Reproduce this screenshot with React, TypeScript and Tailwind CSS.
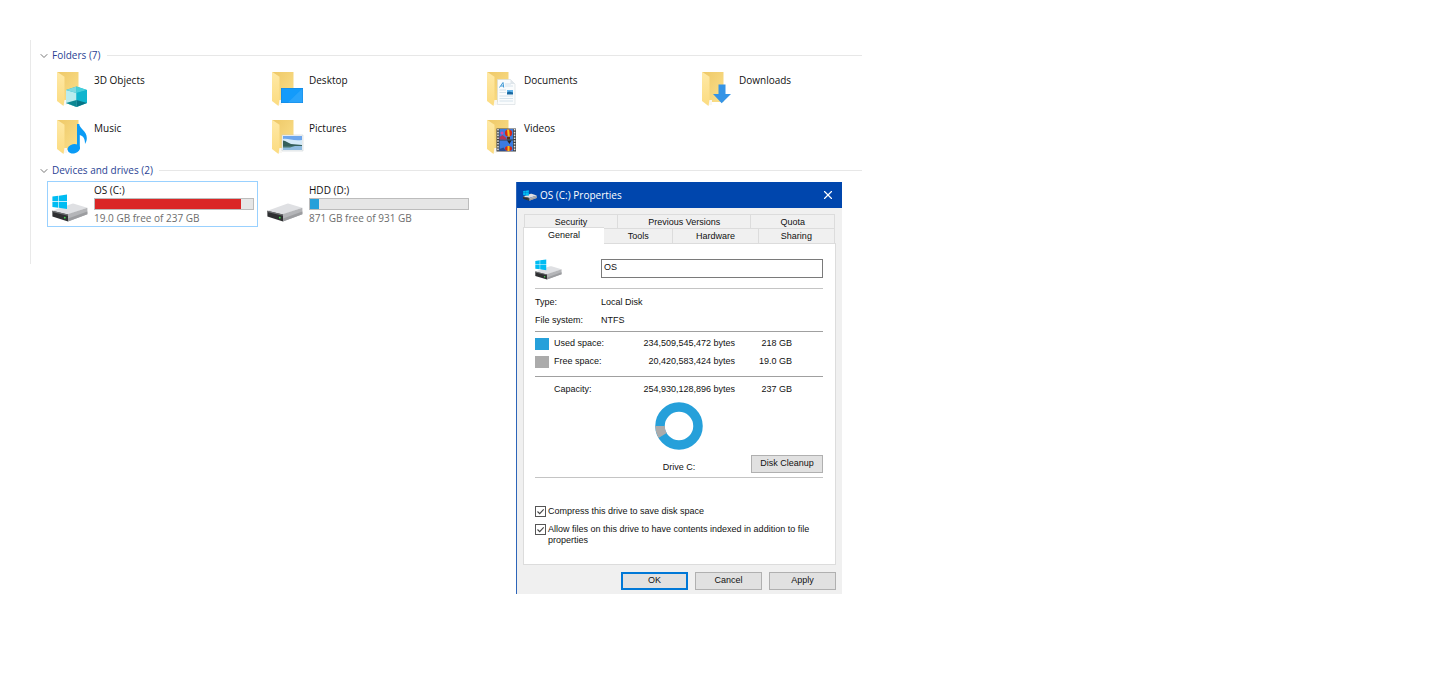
import React from 'react';
import { ChevronDown, X } from 'lucide-react';

const folders = [
  { name: '3D Objects', kind: 'objects' },
  { name: 'Desktop', kind: 'desktop' },
  { name: 'Documents', kind: 'documents' },
  { name: 'Downloads', kind: 'downloads' },
  { name: 'Music', kind: 'music' },
  { name: 'Pictures', kind: 'pictures' },
  { name: 'Videos', kind: 'videos' },
];

const drives = [
  { name: 'OS (C:)', info: '19.0 GB free of 237 GB', used: 92.5, color: 'bg-[#da2626]', system: true },
  { name: 'HDD (D:)', info: '871 GB free of 931 GB', used: 6, color: 'bg-[#26a0da]', system: false },
];

const backTabs = [
  { name: 'Security', width: 'w-[30%]' },
  { name: 'Previous Versions', width: 'w-[43%]' },
  { name: 'Quota', width: 'w-[27%]' },
];

const frontTabs = [
  { name: 'Tools', width: 'w-[30%]' },
  { name: 'Hardware', width: 'w-[37%]' },
  { name: 'Sharing', width: 'w-[33%]' },
];

function FolderBadge({ kind }: { kind: string }) {
  switch (kind) {
    case 'objects':
      return (
        <g>
          <path d="M20.500 15.500 31 19v13l-10.500 4L10 32V19z" fill="#18b7cb" />
          <path d="M10 19l10.500 3V36L10 32z" fill="#b9ecee" />
          <path d="M10 19l10.500-3.500V22z" fill="#7fd9e0" />
          <path d="M20.500 15.500 31 19l-10.500 3z" fill="#45cfdc" />
          <path d="M10 32l10.500-3v7z" fill="#0c8793" />
          <path d="M20.500 22 31 19v13l-10.500-3z" fill="#0fb5cf" />
          <path d="M20.500 29 31 32l-10.500 4z" fill="#067486" />
        </g>
      );
    case 'desktop':
      return (
        <g>
          <path d="M10 17h22v15H10z" fill="#1583dc" />
          <path d="M10.500 17.500h21v14h-21z" fill="#139bfb" />
          <path d="M31.500 17.500v14H17z" fill="#3fadfc" opacity="0.5" />
        </g>
      );
    case 'documents':
      return (
        <g>
          <path d="M11.500 8.500h13l4.500 4.500v20.500H11.500z" fill="#fafcfd" stroke="#d3dade" strokeWidth="0.6" />
          <path d="M24.500 8.500V13H29z" fill="#dfe6eb" />
          <path d="M13.500 16.500l3.500-5 .7 5M15 15h2.500" stroke="#2d8ed0" strokeWidth="0.9" fill="none" />
          <path d="M19 13h6M19 15h8M13.500 19h6.500M13.500 21.500h6.500M13.500 25h13.500M13.500 27.500h13.500M13.500 30h13.500" stroke="#ccdce6" strokeWidth="0.8" />
          <path d="M21 19h6v4h-6z" fill="#62b5ec" />
          <path d="M21 21.500l2-1 4 1v2h-6z" fill="#17679f" />
        </g>
      );
    case 'downloads':
      return <path d="M17.500 13.500h7V23H30l-9.300 9.300L12 23h5.500z" fill="#3594e6" />;
    case 'music':
      return (
        <g fill="#0a9bf5">
          <path d="M21 5h2.200c.6 5 7.600 7 7.600 14 0 2.500-.6 4-1.800 6 .2-5.500-2-8-5.200-9v14H21z" />
          <ellipse cx="17.800" cy="29.700" rx="6.300" ry="4.700" transform="rotate(-14 17.800 29.700)" />
        </g>
      );
    case 'pictures':
      return (
        <g>
          <path d="M11 16h21v16H11z" fill="#f4f6f8" stroke="#c2c8cc" strokeWidth="0.5" />
          <path d="M12 17h19v14H12z" fill="#6ea6ec" />
          <path d="M12 20c5-1 9 2 19 1v6H12z" fill="#d5eaf8" />
          <path d="M12 21.500c3 0 5 2.500 8 3.500l11 1V27H12z" fill="#35605b" />
          <path d="M12 27h19v4H12z" fill="#8fbbdf" />
          <path d="M12 27h12l-5 1.500h-7z" fill="#46746b" />
        </g>
      );
    case 'videos':
      return (
        <g>
          <path d="M10.500 9.500H30v23H10.500z" fill="#3c3f42" />
          <path d="M13.500 10h13.500v10.500H13.500zM13.500 21.500h13.500V32H13.500z" fill="#3b7be0" />
          <path d="M12 10v22M28.600 10v22" stroke="#e5e5e5" strokeWidth="1.600" strokeDasharray="1.600 1.200" />
          <ellipse cx="22.500" cy="14" rx="3.600" ry="3.600" fill="#d42718" />
          <path d="M21 10.500h2.200l.6 7h-2z" fill="#f2c31b" />
          <path d="M21 18h3v2.500h-3z" fill="#57361a" />
          <circle cx="16" cy="14" r="1.500" fill="#e0479d" />
          <path d="M13.500 18l3-2 4 3v1.500h-7z" fill="#b43456" />
          <path d="M21 21.500h4.500L23.500 25z" fill="#2b251d" />
          <ellipse cx="22.500" cy="29.500" rx="3.600" ry="2.500" fill="#d42718" />
          <path d="M21.500 27h2v5h-2z" fill="#f2c31b" />
          <path d="M13.500 30l4-1.500 2.500 3.500h-6.500z" fill="#2a4c93" />
        </g>
      );
    default:
      return null;
  }
}

function FolderIcon({ kind }: { kind: string }) {
  return (
    <svg viewBox="0 0 36 36" className="h-9 w-9 shrink-0" aria-hidden="true">
      <defs>
        <linearGradient id={`back-${kind}`} x1="0" y1="0" x2="1" y2="1">
          <stop offset="0" stopColor="#eec867" />
          <stop offset="1" stopColor="#fbe08c" />
        </linearGradient>
        <linearGradient id={`flap-${kind}`} x1="0" y1="0" x2="0" y2="1">
          <stop offset="0" stopColor="#ffe9a6" />
          <stop offset="1" stopColor="#fbdb80" />
        </linearGradient>
      </defs>
      <path d="M1 1h21.500v30H8z" fill={`url(#back-${kind})`} />
      <path d="M7 29h4v5H7z" fill="#f8f7f4" />
      <path d="M1 .7l7.500 5v23L7.500 35 1 30z" fill={`url(#flap-${kind})`} />
      <FolderBadge kind={kind} />
    </svg>
  );
}

function DriveIcon({ system, className }: { system: boolean; className: string }) {
  return (
    <svg viewBox="0 0 36 28" className={className} aria-hidden="true">
      <path d="M.4 16.700 20 9.700q1-.3 2 0l13.300 4L16 20.500z" fill="#dfe0e3" />
      <path d="M15.500 20.300 35.400 13.700v6.600L16 27.400z" fill="#b4b5b8" />
      <path d="M16 24.500 35.400 17.500v2.800L16 27.400z" fill="#9c9da0" />
      <path d="M.4 16.700 16 20.500v6.900L.4 22.500z" fill="#2e2f31" />
      <path d="M.4 16.700 16 20.500v1.300L.4 17.900z" fill="#6d6f72" />
      <circle cx="12.800" cy="23.700" r="0.900" fill="#3fe04a" />
      {system && (
        <path
          d="M.4 2.600 6.300 1.800v5.300H.4zM6.900 1.700 15 .6v6.500H6.900zM.4 7.700h5.900v6L.4 12.900zM6.900 7.700H15v7.200l-8.100-1.100z"
          fill="#00bcf2"
        />
      )}
    </svg>
  );
}

function SectionHeader({ title }: { title: string }) {
  return (
    <div className="flex h-[19px] items-center pl-[7px]">
      <ChevronDown className="h-3 w-3 text-[#777777]" strokeWidth={2} />
      <h2 className="ml-0.5 pb-0.5 text-[10px] leading-4 text-[#2a3f94]">{title}</h2>
      <div className="ml-1.5 h-px flex-1 bg-[#e7e7e7]" />
    </div>
  );
}

function Drive({ drive, selected }: { drive: (typeof drives)[number]; selected: boolean }) {
  return (
    <li
      className={`flex h-[46px] gap-1.5 border pt-px pr-[3px] pl-1 ${
        selected ? 'border-[#99d1ff]' : 'border-transparent'
      }`}
    >
      <DriveIcon system={drive.system} className="mt-[11px] h-7 w-9 shrink-0" />
      <div className="flex-1 text-[10px] leading-[14px]">
        <p className="text-[#111111]">{drive.name}</p>
        <div className="mt-px h-3 border border-[#bcbcbc] bg-[#e6e6e6]">
          <div className={`h-full ${drive.color}`} style={{ width: `${drive.used}%` }} />
        </div>
        <p className="pt-px text-[#6d6d6d]">{drive.info}</p>
      </div>
    </li>
  );
}

function Tab({ name, width }: { name: string; width: string }) {
  return (
    <button
      type="button"
      role="tab"
      aria-selected={false}
      className={`h-full border-t border-r border-[#dcdcdc] pt-px ${width}`}
    >
      {name}
    </button>
  );
}

function CheckRow({ id, label }: { id: string; label: string }) {
  return (
    <div className="flex items-start gap-0.5">
      <div className="grid shrink-0">
        <input
          id={id}
          type="checkbox"
          defaultChecked
          className="peer col-start-1 row-start-1 h-[11px] w-[11px] appearance-none border border-[#555555] bg-white"
        />
        <svg
          viewBox="0 0 11 11"
          className="pointer-events-none invisible col-start-1 row-start-1 h-[11px] w-[11px] peer-checked:visible"
        >
          <path d="M2.500 5.500l2.200 2.200L8.700 3.300" fill="none" stroke="#444444" strokeWidth="1.100" />
        </svg>
      </div>
      <label htmlFor={id} className="leading-[11px]">
        {label}
      </label>
    </div>
  );
}

function PropertiesDialog() {
  return (
    <div
      role="dialog"
      aria-label="OS (C:) Properties"
      className="absolute top-[142px] left-[486px] w-[326px] border-l border-[#2d65b9] bg-[#f0f0f0] font-['Liberation_Sans',sans-serif] text-[9px] text-[#111111]"
    >
      {/* Title bar */}
      <div className="flex h-[26px] items-center bg-[#0046ad] pr-[7px] pl-1.5 text-white">
        <DriveIcon system className="h-[11px] w-[14px]" />
        <h1 className="ml-[3px] flex-1 font-['Open_Sans','Noto_Sans',sans-serif] text-[10px]">OS (C:) Properties</h1>
        <button type="button" aria-label="Close">
          <X className="h-[14px] w-[14px]" strokeWidth={2} />
        </button>
      </div>

      <div className="px-1.5 pt-1.5 pb-1">
        {/* Tabs */}
        <div role="tablist">
          <div className="mx-px flex h-[14px] border-l border-[#dcdcdc]">
            {backTabs.map((tab) => (
              <Tab key={tab.name} name={tab.name} width={tab.width} />
            ))}
          </div>
          <div className="flex h-[15px] pr-px">
            <button
              type="button"
              role="tab"
              aria-selected
              className="-mt-px -mb-px h-[17px] w-[81px] border-t border-l border-[#dcdcdc] bg-white"
            >
              General
            </button>
            <div className="flex flex-1">
              {frontTabs.map((tab) => (
                <Tab key={tab.name} name={tab.name} width={tab.width} />
              ))}
            </div>
          </div>
        </div>

        {/* General page */}
        <div className="border border-[#dcdcdc] bg-white pt-[15px] pr-3 pb-[18px] pl-[11px]">
          <div className="flex items-start">
            <DriveIcon system className="h-[21px] w-[27px]" />
            <input
              type="text"
              defaultValue="OS"
              aria-label="Drive label"
              className="ml-[39px] h-[19px] min-w-0 flex-1 border border-[#7a7a7a] bg-white px-0.5 pb-1"
            />
          </div>

          <dl className="mt-2 grid grid-cols-[66px_1fr] border-t border-b border-t-[#c4c4c4] border-b-[#a0a0a0] pt-1 pb-0.5 leading-[18px]">
            <dt>Type:</dt>
            <dd>Local Disk</dd>
            <dt>File system:</dt>
            <dd>NTFS</dd>
          </dl>

          <table className="w-full border-collapse">
            <tbody>
              <tr className="h-[21px]">
                <td className="w-[19px] pt-[3px]">
                  <div className="h-3 w-[14px] bg-[#26a0da]" />
                </td>
                <th scope="row" className="w-[72px] pt-[3px] text-left font-normal">Used space:</th>
                <td className="pt-[3px] text-right">234,509,545,472 bytes</td>
                <td className="w-[57px] pt-[3px] text-right">218 GB</td>
                <td className="w-[31px]" />
              </tr>
              <tr className="h-[23px]">
                <td className="pb-[5px]">
                  <div className="h-3 w-[14px] bg-[#ababab]" />
                </td>
                <th scope="row" className="pb-[5px] text-left font-normal">Free space:</th>
                <td className="pb-[5px] text-right">20,420,583,424 bytes</td>
                <td className="pb-[5px] text-right">19.0 GB</td>
                <td />
              </tr>
              <tr className="h-[26px] border-t border-[#a0a0a0]">
                <td />
                <th scope="row" className="text-left font-normal">Capacity:</th>
                <td className="text-right">254,930,128,896 bytes</td>
                <td className="text-right">237 GB</td>
                <td />
              </tr>
            </tbody>
          </table>

          <div className="grid grid-cols-3 items-end border-b border-[#c4c4c4] pb-1">
            <div className="col-start-2 flex flex-col items-center gap-3">
              <svg viewBox="0 0 48 48" className="h-12 w-12" aria-label="Disk usage">
                <circle cx="24" cy="24" r="19" fill="none" stroke="#26a0da" strokeWidth="9.500" />
                <path d="M5 24A19 19 0 0 0 7.600 33.500" fill="none" stroke="#ababab" strokeWidth="9.500" />
              </svg>
              <p className="leading-[11px]">Drive C:</p>
            </div>
            <button
              type="button"
              className="h-[18px] w-[72px] justify-self-end border border-[#b0b0b0] bg-[#e1e1e1]"
            >
              Disk Cleanup
            </button>
          </div>

          <div className="mt-7 flex flex-col gap-[7px]">
            <CheckRow id="compress" label="Compress this drive to save disk space" />
            <CheckRow
              id="index"
              label="Allow files on this drive to have contents indexed in addition to file properties"
            />
          </div>
        </div>

        <div className="mt-[7px] flex justify-end gap-[7px]">
          <button type="button" className="h-[18px] w-[67px] border-2 border-[#0078d7] bg-[#e1e1e1]">OK</button>
          <button type="button" className="h-[18px] w-[67px] border border-[#b0b0b0] bg-[#e1e1e1]">Cancel</button>
          <button type="button" className="h-[18px] w-[67px] border border-[#b0b0b0] bg-[#e1e1e1]">Apply</button>
        </div>
      </div>
    </div>
  );
}

export default function App() {
  return (
    <div className="min-h-screen bg-white pt-10 pl-[30px] font-['Open_Sans','Noto_Sans',sans-serif]">
      <main className="relative w-full max-w-[832px]">
        <div className="border-l border-[#e9e9e9] pt-1.5 pb-[37px]">
          <section>
            <SectionHeader title="Folders (7)" />
            <ul className="grid grid-cols-[211px_211px_211px_1fr] gap-x-1 pl-4">
              {folders.map((folder) => (
                <li key={folder.name} className="flex h-12 gap-0.5 pt-1.5 pl-[9px]">
                  <FolderIcon kind={folder.kind} />
                  <span className="pt-0.5 text-[10px] leading-[14px] text-[#111111]">{folder.name}</span>
                </li>
              ))}
            </ul>
          </section>

          <section>
            <SectionHeader title="Devices and drives (2)" />
            <ul className="mt-px grid grid-cols-[211px_211px] gap-x-1 pl-4">
              {drives.map((drive, index) => (
                <Drive key={drive.name} drive={drive} selected={index === 0} />
              ))}
            </ul>
          </section>
        </div>

        <PropertiesDialog />
      </main>
    </div>
  );
}
